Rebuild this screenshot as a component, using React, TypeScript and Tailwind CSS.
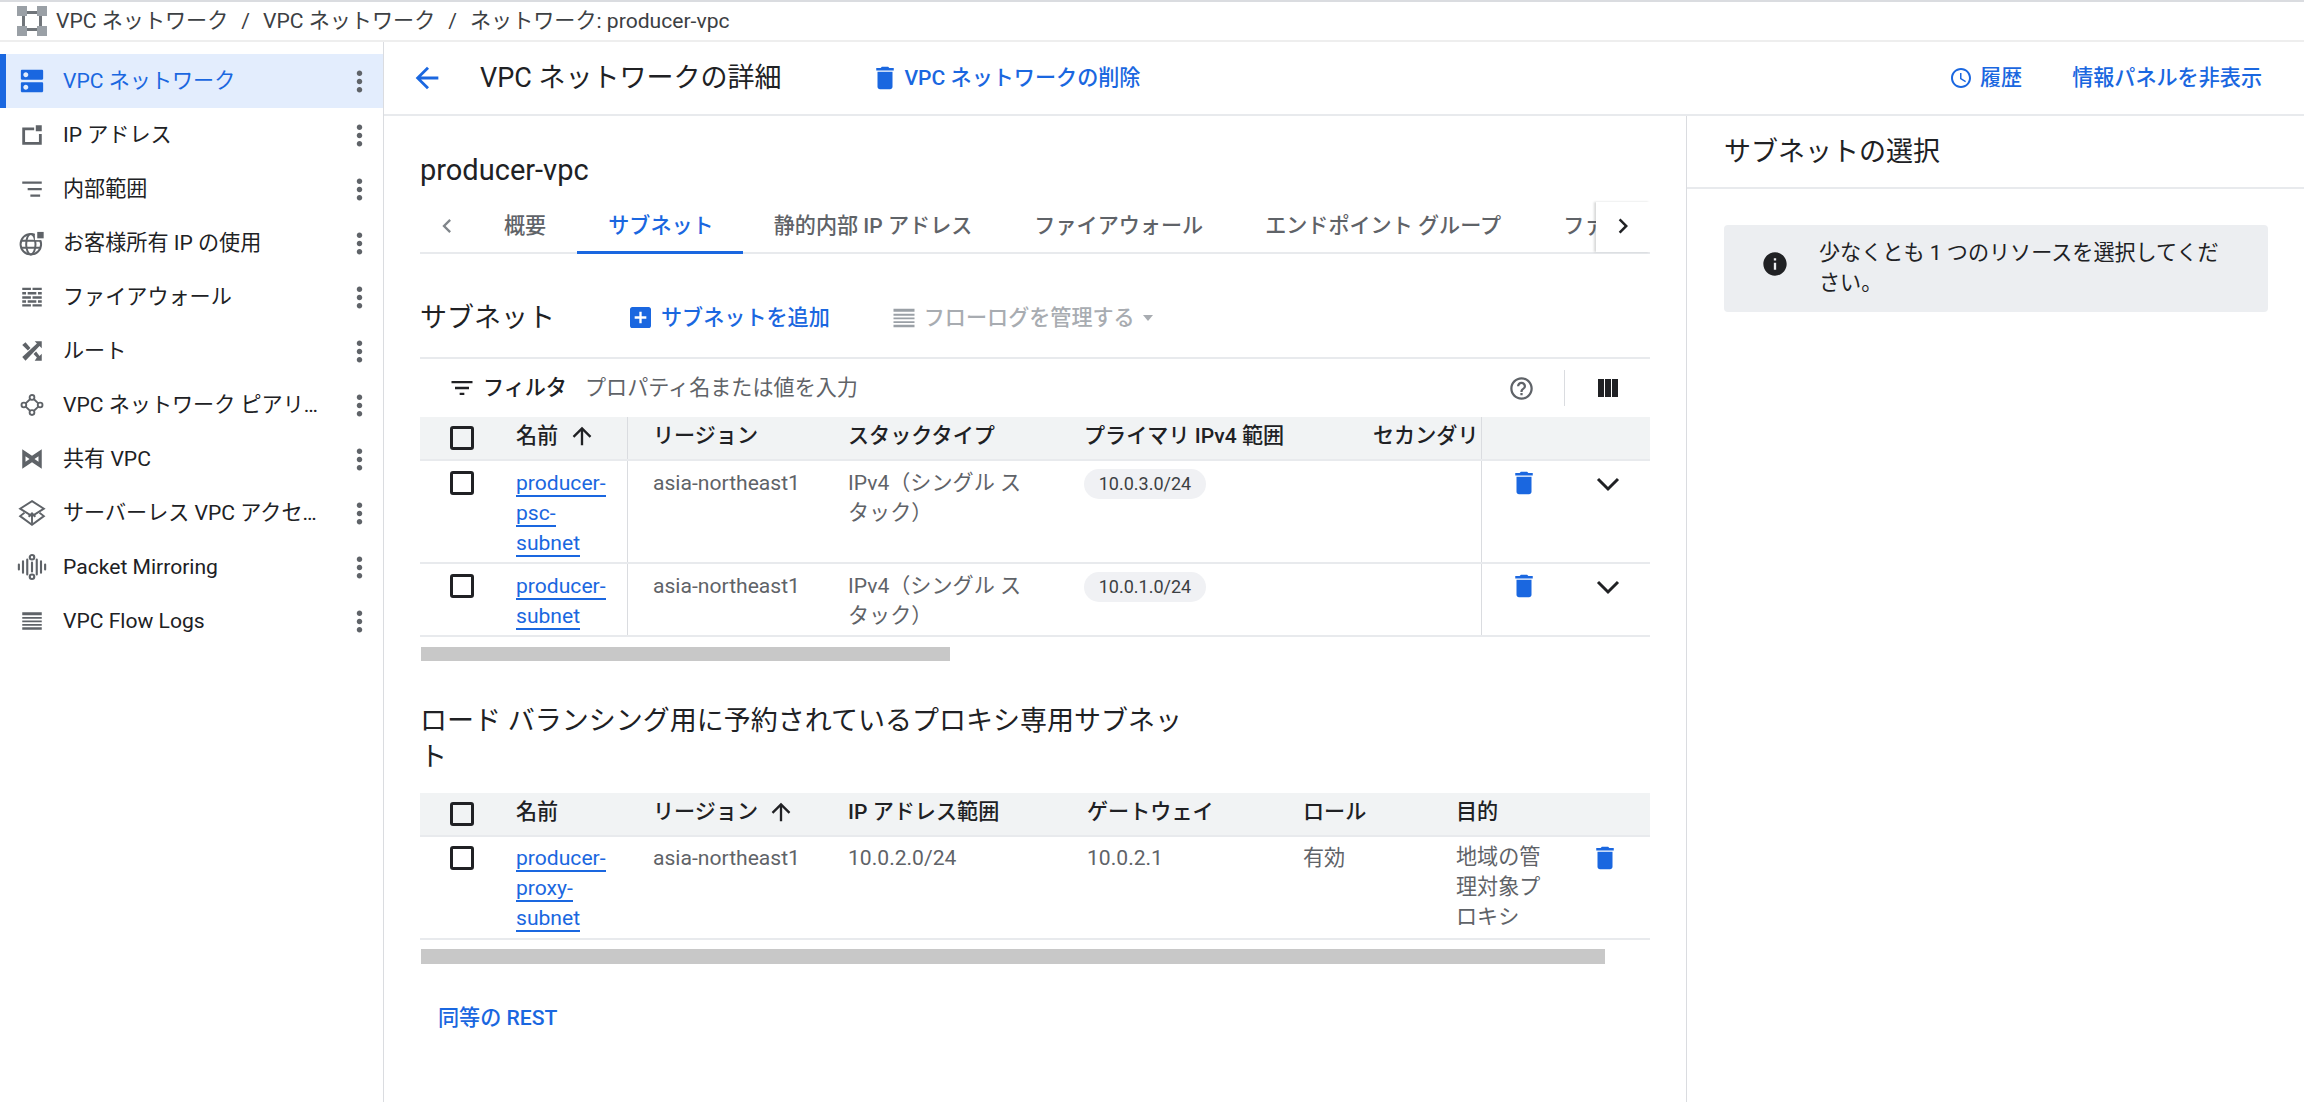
import React from "react";

function Svg({ size = 24, view = "0 0 24 24", className = "", children }: { size?: number; view?: string; className?: string; children: React.ReactNode }) {
  return (
    <svg width={size} height={size} viewBox={view} className={`shrink-0 ${className}`} fill="currentColor">
      {children}
    </svg>
  );
}

function TrashIcon({ size = 30, className = "" }: { size?: number; className?: string }) {
  return (
    <Svg size={size} view="0 0 24 24" className={className}>
      <path d="M6 19c0 1.1.9 2 2 2h8c1.1 0 2-.9 2-2V7H6v12zM19 4h-3.5l-1-1h-5l-1 1H5v2h14V4z" />
    </Svg>
  );
}

function MoreIcon() {
  return (
    <Svg size={33}>
      <path d="M12 8c1.1 0 2-.9 2-2s-.9-2-2-2-2 .9-2 2 .9 2 2 2zm0 2c-1.1 0-2 .9-2 2s.9 2 2 2 2-.9 2-2-.9-2-2-2zm0 6c-1.1 0-2 .9-2 2s.9 2 2 2 2-.9 2-2-.9-2-2-2z" />
    </Svg>
  );
}

function ArrowUp({ className = "" }: { className?: string }) {
  return (
    <Svg size={28} className={className}>
      <path d="M4 12l1.41 1.41L11 7.83V20h2V7.83l5.58 5.59L20 12l-8-8-8 8z" />
    </Svg>
  );
}

function FlowLogsIcon({ size = 28 }: { size?: number }) {
  return (
    <Svg size={size}>
      <path d="M3 4h18v2.6H3zM3 8.4h18v1.6H3zM3 11.5h18v1.6H3zM3 14.7h18v1.6H3zM3 17.8h18V20H3z" />
    </Svg>
  );
}

const navIcons: React.ReactNode[] = [
  <Svg size={26} view="1.5 1.5 21 21" key="vpc">
    <path d="M20 13H4c-.55 0-1 .45-1 1v6c0 .55.45 1 1 1h16c.55 0 1-.45 1-1v-6c0-.55-.45-1-1-1zM7 19c-1.1 0-2-.9-2-2s.9-2 2-2 2 .9 2 2-.9 2-2 2zM20 3H4c-.55 0-1 .45-1 1v6c0 .55.45 1 1 1h16c.55 0 1-.45 1-1V4c0-.55-.45-1-1-1zM7 9c-1.1 0-2-.9-2-2s.9-2 2-2 2 .9 2 2-.9 2-2 2z" />
  </Svg>,
  <Svg size={26} key="ip">
    <path d="M3 5h11v2.600H5.600v10.800h12.800V11H21v10H3zM15.500 3H21v5.500h-5.500z" />
  </Svg>,
  <Svg size={26} key="range">
    <path d="M3 5h18v2.200H3zM8 11h13v2.200H8zM10.500 17h9v2.200h-9z" />
  </Svg>,
  <Svg size={28} key="byoip">
    <g fill="none" stroke="currentColor" strokeWidth="1.700">
      <circle cx="11" cy="13" r="8.800" />
      <ellipse cx="11" cy="13" rx="4" ry="8.800" />
      <path d="M2.500 10h17M2.500 16h17" />
    </g>
    <rect x="14.500" y="0.500" width="9" height="9" fill="#ffffff" />
    <rect x="16.500" y="2.500" width="5.500" height="5.500" />
  </Svg>,
  <Svg size={26} key="firewall">
    <path d="M3 3.500h8v2H3zM12.500 3.500H21v2h-8.500zM3 7.300h3.500v2.300H3zM8 7.300h8v2.300H8zM17.500 7.300H21v2.300h-3.500zM3 11.200h8v2.300H3zM12.500 11.200H21v2.300h-8.500zM3 15h3.500v2.300H3zM8 15h8v2.300H8zM17.500 15H21v2.300h-3.500zM3 18.800h8v2H3zM12.500 18.800H21v2h-8.500z" />
  </Svg>,
  <Svg size={26} key="route">
    <path d="M10.590 9.170 6 4 3 6.400l5.200 5.200zM14.500 3l2.040 2.040L3 17.500 6 21 18.960 7.460 21 9.500V3zM15.800 12.400l-2.400 2.400 3.100 3.150L14.500 21H21v-6.500l-2.040 2.040z" />
  </Svg>,
  <Svg size={26} key="peering">
    <g fill="none" stroke="currentColor" strokeWidth="1.700">
      <circle cx="12" cy="5" r="2.200" />
      <circle cx="12" cy="19" r="2.200" />
      <circle cx="4.500" cy="12" r="2.200" />
      <circle cx="19.500" cy="12" r="2.200" />
      <path d="M10.400 6.500 6.200 10.500M13.600 6.500l4.200 4M6.200 13.500l4.200 4M17.800 13.500l-4.200 4" />
    </g>
  </Svg>,
  <Svg size={26} key="shared">
    <path fillRule="evenodd" d="M3 3 12 9l9-6v18l-9-6-9 6zM6 9.500v5l3.700-2.500zM18 9.500 14.300 12l3.700 2.500z" />
  </Svg>,
  <Svg size={30} key="serverless">
    <g fill="none" stroke="currentColor" strokeWidth="1.500">
      <path d="M12 2.500 21.500 8.500 12 14.500 2.500 8.500z" />
      <path d="M6 11.800 2.500 14.500 12 21.500l9.500-7-3.500-2.700" />
      <path d="M12 20.500v-8M9.300 15l2.700-2.700 2.700 2.700" />
    </g>
  </Svg>,
  <Svg size={30} key="packet">
    <g fill="none" stroke="currentColor" strokeWidth="1.700" strokeLinecap="round">
      <circle cx="12" cy="4.200" r="1.800" />
      <circle cx="12" cy="19.800" r="1.800" />
      <path d="M1.500 10v4M4.800 7.500v9M8.200 6v12M15.800 6v12M19.200 7.500v9M22.500 10v4M12 8.500v7" />
    </g>
  </Svg>,
  <FlowLogsIcon size={26} key="flow" />,
];

const navItems = [
  "VPC ネットワーク",
  "IP アドレス",
  "内部範囲",
  "お客様所有 IP の使用",
  "ファイアウォール",
  "ルート",
  "VPC ネットワーク ピアリング",
  "共有 VPC",
  "サーバーレス VPC アクセス",
  "Packet Mirroring",
  "VPC Flow Logs",
];

function Sidebar() {
  return (
    <div className="w-[384px] shrink-0 border-r border-[#dadce0] pt-[12px]">
      {navItems.map((item, i) => (
        <div
          key={item}
          className={
            i === 0
              ? "flex h-[54px] items-center border-l-[6px] border-[#1a67e0] bg-[#e3edfd] pl-[12px] text-[#1a67e0]"
              : "flex h-[54px] items-center border-l-[6px] border-transparent pl-[12px] text-[#202124]"
          }
        >
          <div className={i === 0 ? "flex w-[27px] justify-center text-[#1a67e0]" : "flex w-[27px] justify-center text-[#5f6368]"}>{navIcons[i]}</div>
          <div className="ml-[18px] w-[256px] truncate">{item}</div>
          <div className="ml-[24px] text-[#5f6368]">
            <MoreIcon />
          </div>
        </div>
      ))}
    </div>
  );
}

function Logo() {
  return (
    <svg width="30" height="30" viewBox="0 0 30 30" className="shrink-0">
      <path d="M8 5h14v3H8zM8 22h14v3H8zM5 8h3v14H5zM22 8h3v14h-3z" fill="#70757a" />
      <path d="M0 0h10v10H0zM20 0h10v10H20zM0 20h10v10H0zM20 20h10v10H20z" fill="#9aa0a6" />
    </svg>
  );
}

function Checkbox() {
  return <div className="ml-[30px] h-[24px] w-[24px] rounded-[3px] border-[3px] border-[#202124]" />;
}

function NameLink({ text }: { text: string }) {
  return <span className="border-b-2 border-[#1a67e0] text-[#1a67e0]">{text}</span>;
}

function Chip({ text }: { text: string }) {
  return <div className="inline-flex h-[30px] w-[122px] items-center justify-center rounded-full bg-[#f0f1f4] text-[18px] text-[#3c4043]">{text}</div>;
}

function ExpandIcon() {
  return (
    <svg width="24" height="15" viewBox="0 0 24 15" fill="none" stroke="#202124" strokeWidth="3" className="shrink-0">
      <path d="M2 2l10 10L22 2" />
    </svg>
  );
}

const subnets = [
  { name: "producer-psc-subnet", ip: "10.0.3.0/24" },
  { name: "producer-subnet", ip: "10.0.1.0/24" },
];

function SubnetTable() {
  const cols = "grid grid-cols-[77px_131px_195px_236px_289px_134px_168px]";
  return (
    <div>
      <div className={`${cols} h-[44px] items-center border-b-2 border-[#e8eaed] bg-[#f1f3f4] font-medium text-[#202124]`}>
        <Checkbox />
        <div className="flex h-full items-center border-r border-[#dadce0] pb-[4px] pl-[19px]">
          名前
          <ArrowUp className="ml-[10px]" />
        </div>
        <div className="pb-[4px] pl-[25px]">リージョン</div>
        <div className="pb-[4px] pl-[25px]">スタックタイプ</div>
        <div className="pb-[4px] pl-[25px]">プライマリ IPv4 範囲</div>
        <div className="flex h-full items-center whitespace-nowrap border-r border-[#dadce0] pb-[4px] pl-[25px]">セカンダリ</div>
        <div />
      </div>
      {subnets.map((s) => (
        <div key={s.name} className={`${cols} border-b-2 border-[#e8eaed] text-[#5f6368]`}>
          <div className="pt-[10px]">
            <Checkbox />
          </div>
          <div className="border-r border-[#dadce0] pb-[4px] pl-[19px] pr-[18px] pt-[7px]">
            <NameLink text={s.name} />
          </div>
          <div className="pl-[25px] pt-[7px]">asia-northeast1</div>
          <div className="pl-[25px] pr-[26px] pt-[7px]">IPv4（シングル スタック）</div>
          <div className="pl-[25px] pt-[7px]">
            <Chip text={s.ip} />
          </div>
          <div className="border-r border-[#dadce0]" />
          <div className="flex items-start pt-[7px]">
            <TrashIcon className="ml-[27px] text-[#1a67e0]" />
            <div className="ml-[57px] mt-[9px]">
              <ExpandIcon />
            </div>
          </div>
        </div>
      ))}
    </div>
  );
}

function ProxyTable() {
  const cols = "grid grid-cols-[77px_131px_194px_240px_216px_153px_144px_75px]";
  return (
    <div>
      <div className={`${cols} h-[44px] items-center border-b-2 border-[#e8eaed] bg-[#f1f3f4] font-medium text-[#202124]`}>
        <Checkbox />
        <div className="pb-[4px] pl-[19px]">名前</div>
        <div className="flex items-center pb-[4px] pl-[25px]">
          リージョン
          <ArrowUp className="ml-[9px]" />
        </div>
        <div className="pb-[4px] pl-[26px]">IP アドレス範囲</div>
        <div className="pb-[4px] pl-[25px]">ゲートウェイ</div>
        <div className="pb-[4px] pl-[25px]">ロール</div>
        <div className="pb-[4px] pl-[25px]">目的</div>
        <div />
      </div>
      <div className={`${cols} border-b-2 border-[#e8eaed] text-[#5f6368]`}>
        <div className="pt-[9px]">
          <Checkbox />
        </div>
        <div className="pb-[5px] pl-[19px] pr-[18px] pt-[6px]">
          <NameLink text="producer-proxy-subnet" />
        </div>
        <div className="pl-[25px] pt-[6px]">asia-northeast1</div>
        <div className="pl-[26px] pt-[6px]">10.0.2.0/24</div>
        <div className="pl-[25px] pt-[6px]">10.0.2.1</div>
        <div className="pl-[25px] pt-[6px]">有効</div>
        <div className="pl-[25px] pr-[27px] pt-[5px]">地域の管理対象プロキシ</div>
        <div className="pt-[6px]">
          <TrashIcon className="ml-[15px] text-[#1a67e0]" />
        </div>
      </div>
    </div>
  );
}

function Tabs() {
  const tabs = ["概要", "サブネット", "静的内部 IP アドレス", "ファイアウォール", "エンドポイント グループ", "ファイアウォール エンドポイント"];
  return (
    <div className="relative mt-[14px] flex h-[52px] items-start border-b-2 border-[#e8eaed]">
      <div className="flex h-[48px] w-[53px] shrink-0 items-center pl-[13px] text-[#80868b]">
        <Svg size={28}>
          <path d="M15.410 7.410 14 6l-6 6 6 6 1.410-1.410L10.830 12z" />
        </Svg>
      </div>
      <div className="flex h-[52px] w-[1123px] overflow-hidden">
        {tabs.map((t, i) => (
          <div
            key={t}
            className={
              i === 1
                ? "flex h-[52px] shrink-0 items-center whitespace-nowrap border-b-[3px] border-[#1a67e0] pb-[1px] pl-[31px] pr-[29px] font-medium text-[#1a67e0]"
                : "flex h-[52px] shrink-0 items-center whitespace-nowrap border-b-[3px] border-transparent px-[31px] pb-[1px] font-medium text-[#5f6368]"
            }
          >
            {t}
          </div>
        ))}
      </div>
      <div className="absolute bottom-0 right-0 top-0 flex w-[54px] items-center bg-white pb-[2px] pl-[12px] text-[#202124] shadow-[-2px_0_2px_rgba(60,64,67,0.2)]">
        <Svg size={30}>
          <path d="M10 6 8.590 7.410 13.170 12l-4.580 4.590L10 18l6-6z" />
        </Svg>
      </div>
    </div>
  );
}

function Detail() {
  return (
    <div className="w-[1302px] shrink-0 pl-[36px] pr-[36px]">
      <div className="pt-[36px] text-[29px] leading-[36px] text-[#202124]">producer-vpc</div>
      <Tabs />
      <div className="flex h-[103px] items-center pt-[24px] font-medium">
        <div className="w-[210px] text-[27px] font-normal text-[#202124]">サブネット</div>
        <Svg size={21} view="3 3 18 18" className="text-[#1a67e0]">
          <path d="M19 3H5c-1.110 0-2 .9-2 2v14c0 1.100.890 2 2 2h14c1.100 0 2-.9 2-2V5c0-1.100-.9-2-2-2zm-2 10h-4v4h-2v-4H7v-2h4V7h2v4h4v2z" />
        </Svg>
        <div className="ml-[10px] text-[#1a67e0]">サブネットを追加</div>
        <div className="ml-[60px] text-[#9aa0a6]">
          <FlowLogsIcon />
        </div>
        <div className="ml-[6px] text-[#a8acb1]">フローログを管理する</div>
        <div className="ml-[8px] h-0 w-0 border-x-[5px] border-t-[6px] border-x-transparent border-t-[#a8acb1]" />
      </div>
      <div className="flex h-[60px] items-center border-t-2 border-[#e8eaed]">
        <Svg size={28} className="ml-[28px] text-[#202124]">
          <path d="M10 18h4v-2h-4v2zM3 6v2h18V6H3zm3 7h12v-2H6v2z" />
        </Svg>
        <div className="ml-[7px] font-medium text-[#202124]">フィルタ</div>
        <div className="ml-[18px] text-[#5f6368]">プロパティ名または値を入力</div>
        <Svg size={27} className="ml-auto text-[#5f6368]">
          <path d="M11 18h2v-2h-2v2zm1-16C6.480 2 2 6.480 2 12s4.480 10 10 10 10-4.480 10-10S17.520 2 12 2zm0 18c-4.410 0-8-3.590-8-8s3.590-8 8-8 8 3.590 8 8-3.590 8-8 8zm0-14c-2.210 0-4 1.790-4 4h2c0-1.100.9-2 2-2s2 .9 2 2c0 2-3 1.750-3 5h2c0-2.250 3-2.500 3-5 0-2.210-1.790-4-4-4z" />
        </Svg>
        <div className="ml-[29px] h-[36px] w-px bg-[#dadce0]" />
        <div className="ml-[33px] mr-[32px] flex h-[18px] w-[20px] gap-[1.5px]">
          <div className="flex-1 bg-[#202124]" />
          <div className="flex-1 bg-[#202124]" />
          <div className="flex-1 bg-[#202124]" />
        </div>
      </div>
      <SubnetTable />
      <div className="ml-px mt-[10px] h-[14px] w-[529px] bg-[#c8c8c8]" />
      <div className="mt-[42px] w-[770px] text-[27px] leading-[36px] text-[#202124]">ロード バランシング用に予約されているプロキシ専用サブネット</div>
      <div className="mt-[18px]">
        <ProxyTable />
      </div>
      <div className="ml-px mt-[9px] h-[15px] w-[1184px] bg-[#c8c8c8]" />
      <div className="ml-[18px] mt-[39px] font-medium text-[#1a67e0]">同等の REST</div>
    </div>
  );
}

function InfoPanel() {
  return (
    <div className="flex-1 border-l border-[#dadce0]">
      <div className="flex h-[73px] items-center border-b-2 border-[#e8eaed] pl-[37px] text-[27px] text-[#202124]">サブネットの選択</div>
      <div className="ml-[37px] mr-[36px] mt-[36px] flex h-[87px] rounded-[4px] bg-[#eceef1] pl-[37px] pr-[36px] pt-[13px] text-[#202124]">
        <Svg size={28} className="mr-[30px] mt-[12px]">
          <path d="M12 2C6.480 2 2 6.480 2 12s4.480 10 10 10 10-4.480 10-10S17.520 2 12 2zm1 15h-2v-6h2v6zm0-8h-2V7h2v2z" />
        </Svg>
        <div>少なくとも 1 つのリソースを選択してください。</div>
      </div>
    </div>
  );
}

export default function App() {
  return (
    <div className="flex h-[1102px] w-full flex-col overflow-hidden bg-white font-[Roboto,'Noto_Sans_CJK_JP',sans-serif] text-[21.1px] leading-[30px]">
      <div className="flex h-[42px] shrink-0 items-center border-b-2 border-t-2 border-b-[#eeeeee] border-t-[#dadce0] pl-[17px] text-[#3c4043]">
        <Logo />
        <div className="ml-[9px] flex gap-[13px] whitespace-nowrap">
          <span>VPC ネットワーク</span>
          <span>/</span>
          <span>VPC ネットワーク</span>
          <span>/</span>
          <span>ネットワーク: producer-vpc</span>
        </div>
      </div>
      <div className="flex min-h-0 flex-1">
        <Sidebar />
        <div className="flex min-w-0 flex-1 flex-col">
          <div className="flex h-[74px] shrink-0 items-center border-b-2 border-[#e8eaed] font-medium text-[#1a67e0]">
            <Svg size={34} className="ml-[26px]">
              <path d="M20 11H7.830l5.590-5.590L12 4l-8 8 8 8 1.410-1.410L7.830 13H20v-2z" />
            </Svg>
            <div className="ml-[36px] text-[27px] font-normal text-[#202124]">VPC ネットワークの詳細</div>
            <TrashIcon className="ml-[88px]" />
            <div className="ml-[5px]">VPC ネットワークの削除</div>
            <Svg size={24} className="ml-auto">
              <path d="M11.990 2C6.470 2 2 6.480 2 12s4.470 10 9.990 10C17.520 22 22 17.520 22 12S17.520 2 11.990 2zM12 20c-4.420 0-8-3.580-8-8s3.580-8 8-8 8 3.580 8 8-3.580 8-8 8zm.5-13H11v6l5.250 3.150.75-1.230-4.500-2.670z" />
            </Svg>
            <div className="ml-[7px]">履歴</div>
            <div className="ml-[50px] mr-[42px]">情報パネルを非表示</div>
          </div>
          <div className="flex min-h-0 flex-1">
            <Detail />
            <InfoPanel />
          </div>
        </div>
      </div>
    </div>
  );
}
